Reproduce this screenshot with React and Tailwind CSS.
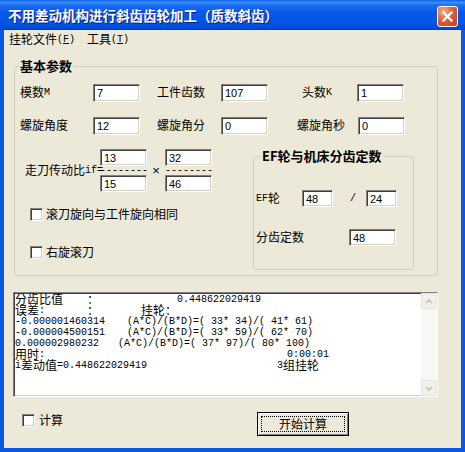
import React from 'react';

const CJK = /([\u2E80-\u9FFF\u3000-\u303F\uFF00-\uFFEF]+)/;

// ASCII runs stay in the 6px-wide mono face, CJK runs go to 12px Noto
const Mix = ({ t }) =>
    t.split(CJK).map((p, i) =>
        CJK.test(p) ? (
            <span key={i} className="relative -top-[1px] inline-block align-top font-['Noto_Sans_CJK_SC',sans-serif] text-[12px]">
                {p}
            </span>
        ) : (
            <React.Fragment key={i}>{p}</React.Fragment>
        )
    );

const sunken =
    'border border-t-[#808080] border-l-[#808080] border-b-white border-r-white shadow-[inset_1px_1px_0_#404040,inset_-1px_-1px_0_#d4d0c8]';

const Box = ({ v, w = 'w-[47px]', h = 'h-[18px]' }) => (
    <div className={`${sunken} ${w} ${h} bg-white flex items-center pl-[3px] font-['Liberation_Sans',sans-serif] text-[11px] shrink-0`}>
        {v}
    </div>
);

const Check = () => <div className={`${sunken} w-[13px] h-[13px] bg-white shrink-0`} />;

const Frac = ({ top, bottom }) => (
    <div className="flex flex-col w-[47px]">
        <Box v={top} h="h-[17px]" />
        <div className="h-[9px] leading-[9px] whitespace-nowrap">--------</div>
        <Box v={bottom} h="h-[17px]" />
    </div>
);

const Line = ({ children }) => <div className="h-[11px] leading-[11px] whitespace-pre">{children}</div>;

const Chevron = ({ up }) => (
    <svg width="8" height="5" viewBox="0 0 8 5">
        <path d={up ? 'M1 4 L4 1 L7 4' : 'M1 1 L4 4 L7 1'} fill="none" stroke="#c3c1b3" strokeWidth="1.6" />
    </svg>
);

export default function App() {
    return (
        <div className="w-[465px] h-[452px] bg-[#ece9d8] flex flex-col overflow-hidden text-black">
            <div className="h-[30px] shrink-0 flex items-center justify-between pl-[8px] pr-[7px] bg-[linear-gradient(to_bottom,#0a5fe8_0%,#3d8ef6_8%,#1b6df2_18%,#0858e8_40%,#0054e3_80%,#0049d6_94%,#003dc2_100%)]">
                <span className="font-['Noto_Sans_CJK_SC',sans-serif] font-bold text-[13.5px] text-white [text-shadow:1px_1px_#0f1a89]">
                    不用差动机构进行斜齿齿轮加工（质数斜齿）
                </span>
                <div className="w-[21px] h-[21px] mt-[2px] rounded-[3px] border border-white bg-[radial-gradient(circle_at_30%_25%,#f4b096,#e2603a_45%,#c23a17)] flex items-center justify-center">
                    <svg width="11" height="11" viewBox="0 0 11 11">
                        <path d="M1.5 1.5 L9.5 9.5 M9.5 1.5 L1.5 9.5" stroke="white" strokeWidth="2.2" strokeLinecap="square" />
                    </svg>
                </div>
            </div>

            <div className="flex-1 flex flex-col border-x-4 border-b-4 border-[#0a57e4] font-['Liberation_Mono','Noto_Sans_CJK_SC',monospace] text-[10px] leading-[14px]">
                <div className="h-[20px] shrink-0 flex items-center pl-[5px]">
                    <span>
                        <Mix t="挂轮文件" />(<span className="underline">F</span>)
                    </span>
                    <span className="ml-[12px]">
                        <Mix t="工具" />(<span className="underline">T</span>)
                    </span>
                </div>

                <div className="pl-[10px] flex flex-col">
                    <fieldset className="mt-[9px] w-[424px] border border-[#d0d0bf] rounded-[3px]">
                        <legend className="ml-[4px] px-[1px] font-['Noto_Sans_CJK_SC',sans-serif] font-bold text-[13px] leading-[14px]">
                            基本参数
                        </legend>
                        <div className="pl-[5px] pt-[11px] pb-[5px]">
                            <div className="flex items-center h-[18px]">
                                <span className="w-[73px]"><Mix t="模数M" /></span>
                                <Box v="7" />
                                <span className="ml-[17px] w-[64px]"><Mix t="工件齿数" /></span>
                                <Box v="107" />
                                <span className="ml-[34px] w-[55px]"><Mix t="头数K" /></span>
                                <Box v="1" />
                            </div>
                            <div className="flex items-center h-[18px] mt-[15px]">
                                <span className="w-[73px]"><Mix t="螺旋角度" /></span>
                                <Box v="12" />
                                <span className="ml-[17px] w-[64px]"><Mix t="螺旋角分" /></span>
                                <Box v="0" />
                                <span className="ml-[29px] w-[61px]"><Mix t="螺旋角秒" /></span>
                                <Box v="0" />
                            </div>

                            <div className="flex mt-[14px]">
                                <div className="w-[233px] flex flex-col">
                                    <div className="flex items-center pl-[5px]">
                                        <span className="w-[75px] whitespace-nowrap"><Mix t="走刀传动比if=" /></span>
                                        <Frac top="13" bottom="15" />
                                        <span className="w-[18px] text-center text-[13px] font-['Liberation_Sans',sans-serif]">×</span>
                                        <Frac top="32" bottom="46" />
                                    </div>
                                    <div className="flex items-center h-[13px] mt-[16px] pl-[10px]">
                                        <Check />
                                        <span className="ml-[3px]"><Mix t="滚刀旋向与工件旋向相同" /></span>
                                    </div>
                                    <div className="flex items-center h-[13px] mt-[25px] pl-[10px]">
                                        <Check />
                                        <span className="ml-[3px]"><Mix t="右旋滚刀" /></span>
                                    </div>
                                </div>

                                <fieldset className="w-[161px] border border-[#d0d0bf] rounded-[3px]">
                                    <legend className="ml-[7px] px-[1px] font-['Noto_Sans_CJK_SC',sans-serif] font-bold text-[13px] leading-[14px]">
                                        EF轮与机床分齿定数
                                    </legend>
                                    <div className="pl-[2px] pt-[27px] pb-[23px]">
                                        <div className="flex items-center h-[17px]">
                                            <span className="w-[46px]"><Mix t="EF轮" /></span>
                                            <Box v="48" w="w-[31px]" h="h-[17px]" />
                                            <span className="w-[33px] pl-[17px]">/</span>
                                            <Box v="24" w="w-[31px]" h="h-[17px]" />
                                        </div>
                                        <div className="flex items-center h-[17px] mt-[22px]">
                                            <span className="w-[93px]"><Mix t="分齿定数" /></span>
                                            <Box v="48" h="h-[17px]" />
                                        </div>
                                    </div>
                                </fieldset>
                            </div>
                        </div>
                    </fieldset>

                    <div className={`${sunken} -ml-[1px] mt-[16px] w-[425px] h-[105px] bg-white flex`}>
                        <div className="flex-1 pl-[1px] pt-[1px] overflow-hidden">
                            <Line><Mix t="分齿比值    ：             0.448622029419" /></Line>
                            <Line><Mix t="误差:       ：       挂轮：" /></Line>
                            <Line>-0.000001460314<span className="ml-[22px]">(A*C)/(B*D)=( 33* 34)/( 41* 61)</span></Line>
                            <Line>-0.000004500151<span className="ml-[22px]">(A*C)/(B*D)=( 33* 59)/( 62* 70)</span></Line>
                            <Line>0.000002980232<span className="ml-[19px]">(A*C)/(B*D)=( 37* 97)/( 80* 100)</span></Line>
                            <Line><Mix t="用时:" /><span className="ml-[242px]">0:00:01</span></Line>
                            <Line><Mix t="i差动值=0.448622029419" /><span className="ml-[130px]"><Mix t="3组挂轮" /></span></Line>
                        </div>
                        <div className="w-[16px] flex flex-col bg-[#f7f7f3]">
                            <div className="h-[16px] border border-[#e4e3da] rounded-[2px] bg-[#f1f0ea] flex items-center justify-center">
                                <Chevron up />
                            </div>
                            <div className="flex-1" />
                            <div className="h-[16px] border border-[#e4e3da] rounded-[2px] bg-[#f1f0ea] flex items-center justify-center">
                                <Chevron />
                            </div>
                        </div>
                    </div>

                    <div className="flex items-start">
                        <div className="w-[243px] mt-[17px] pl-[8px] flex items-center h-[13px]">
                            <Check />
                            <span className="ml-[4px]"><Mix t="计算" /></span>
                        </div>
                        <div className="mt-[15px] w-[92px] h-[24px] border border-black bg-[#ece9d8] shadow-[inset_1px_1px_0_#fff,inset_-1px_-1px_0_#808080] p-[3px]">
                            <div className="h-full border border-dotted border-black flex items-center justify-center font-['Noto_Sans_CJK_SC',sans-serif] text-[12px]">
                                开始计算
                            </div>
                        </div>
                    </div>
                </div>
            </div>
        </div>
    );
}
